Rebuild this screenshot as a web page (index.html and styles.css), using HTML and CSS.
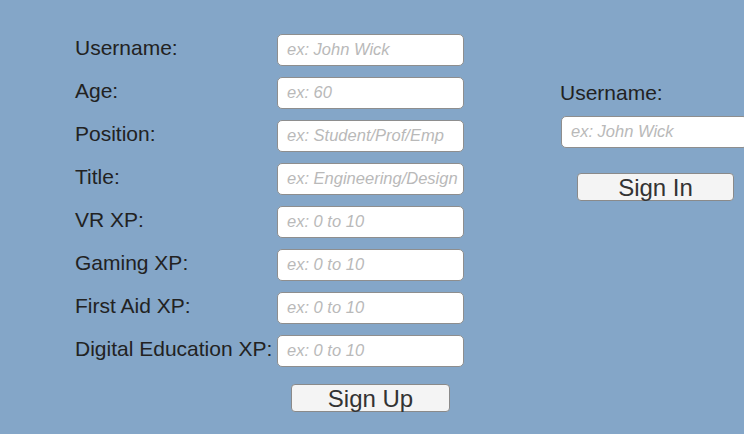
FILE: index.html
```html
<!DOCTYPE html>
<html>
<head>
<meta charset="utf-8">
<link rel="stylesheet" href="styles.css">
</head>
<body>
<div class="screen">
  <form class="signup">
    <div class="grid">
      <label class="lbl">Username:</label><div class="field">ex: John Wick</div>
      <label class="lbl">Age:</label><div class="field">ex: 60</div>
      <label class="lbl">Position:</label><div class="field">ex: Student/Prof/Emp</div>
      <label class="lbl">Title:</label><div class="field">ex: Engineering/Design</div>
      <label class="lbl">VR XP:</label><div class="field">ex: 0 to 10</div>
      <label class="lbl">Gaming XP:</label><div class="field">ex: 0 to 10</div>
      <label class="lbl">First Aid XP:</label><div class="field">ex: 0 to 10</div>
      <label class="lbl">Digital Education XP:</label><div class="field">ex: 0 to 10</div>
    </div>
    <div class="btn signup-btn">Sign Up</div>
  </form>
  <form class="signin">
    <label class="lbl side-lbl">Username:</label>
    <div class="field side-field">ex: John Wick</div>
    <div class="btn signin-btn">Sign In</div>
  </form>
</div>
</body>
</html>
```
FILE: styles.css
```css
html, body {
  margin: 0;
  padding: 0;
}
body {
  background: #84a6c8;
  font-family: "Liberation Sans", Arial, sans-serif;
  width: 744px;
  height: 434px;
  overflow: hidden;
}
.screen {
  display: flex;
  align-items: flex-start;
}
.signup {
  padding: 34px 0 0 75px;
  display: flex;
  flex-direction: column;
}
.grid {
  display: grid;
  grid-template-columns: 202px 187px;
  grid-auto-rows: 32px;
  row-gap: 11px;
}
.lbl {
  display: flex;
  align-items: center;
  font-size: 21px;
  color: #222;
  white-space: nowrap;
  padding-bottom: 4px;
}
.field {
  box-sizing: border-box;
  height: 32px;
  background: #fff;
  border: 1px solid #8e8e8e;
  border-radius: 5px;
  font-style: italic;
  font-size: 16.5px;
  color: #b9b9b9;
  padding: 0 0 1px 9px;
  display: flex;
  align-items: center;
  white-space: nowrap;
  overflow: hidden;
}
.btn {
  box-sizing: border-box;
  background: #f4f4f4;
  border: 1px solid #8a8a8a;
  border-radius: 4px;
  color: #333;
  font-size: 24px;
  display: flex;
  align-items: center;
  justify-content: center;
  padding-top: 1px;
}
.signup-btn {
  width: 159px;
  height: 28px;
  margin: 17px 0 0 216px;
}
.signin {
  margin-left: 96px;
  padding-top: 80px;
  display: flex;
  flex-direction: column;
  flex-shrink: 0;
}
.side-lbl {
  height: 26px;
  padding-bottom: 0;
}
.side-field {
  width: 187px;
  margin: 10px 0 0 1px;
}
.signin-btn {
  width: 157px;
  height: 28px;
  margin: 25px 0 0 17px;
}
```
